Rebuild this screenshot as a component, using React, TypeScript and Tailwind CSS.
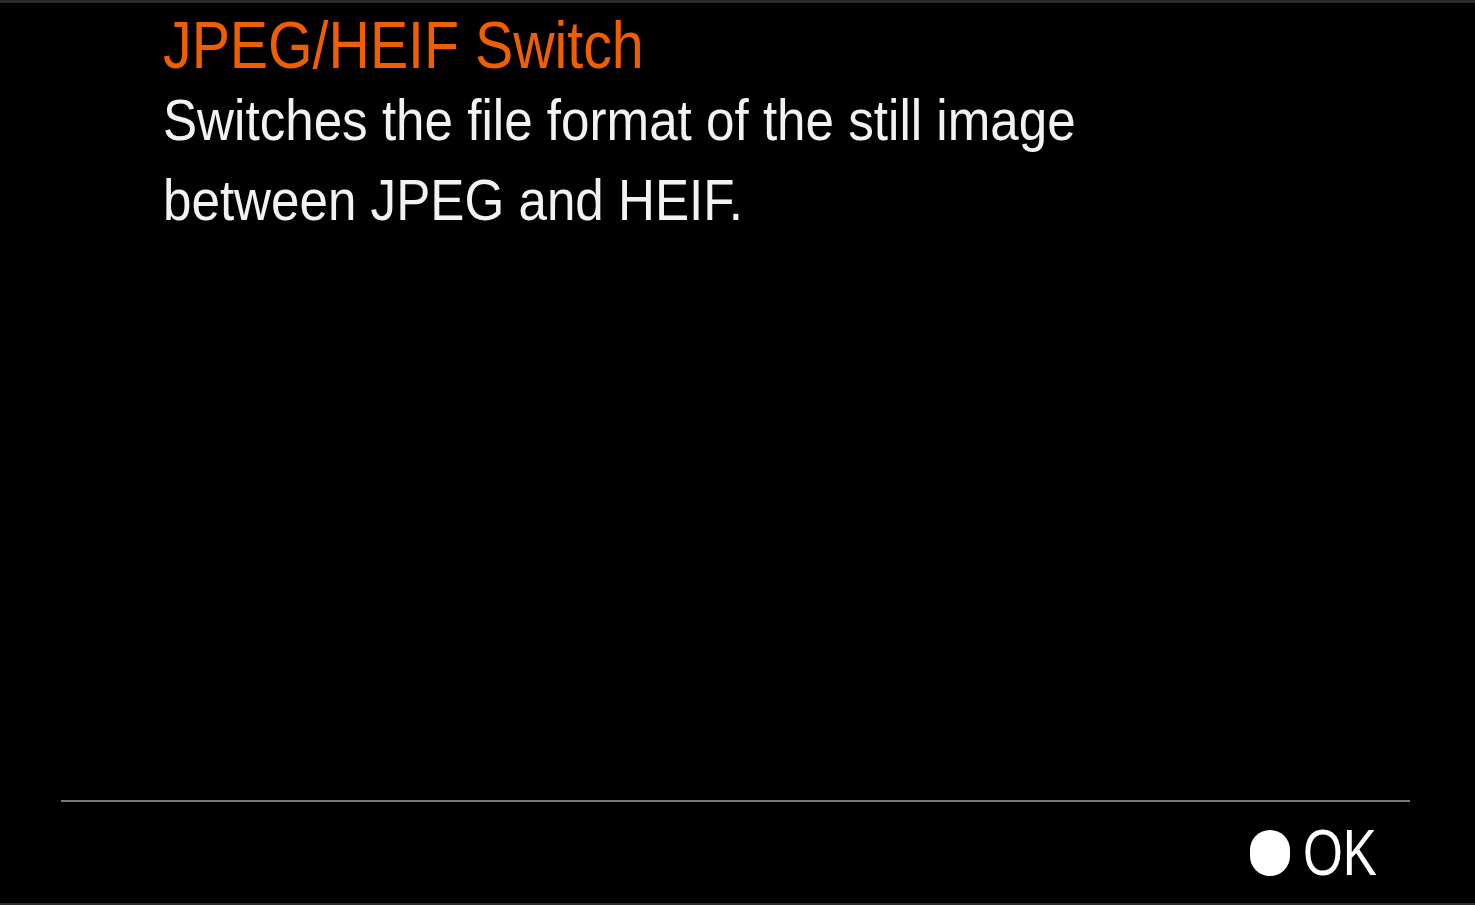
export default function App() {
  return (
    <div
      className="w-[1475px] h-[905px] bg-black border-t-[3px] border-b-[2px] border-[#2b2b2b] flex flex-col overflow-hidden"
      style={{ fontFamily: '"Liberation Sans", Arial, sans-serif' }}
    >
      {/* Help text */}
      <div className="pl-[163px] pt-[8px]">
        <h1 className="text-[67px] leading-[67px] text-[#ef5f00] origin-left scale-x-[0.855] whitespace-nowrap">
          JPEG/HEIF Switch
        </h1>
        <p className="mt-[2px] text-[58px] leading-[80px] text-[#f2f2f2] origin-left scale-x-[0.882] whitespace-nowrap">
          Switches the file format of the still image
          <br />
          between JPEG and HEIF.
        </p>
      </div>

      <div className="flex-1" />

      {/* Footer */}
      <div className="ml-[61px] mr-[65px] h-[2px] bg-[#7a7a7a]" />
      <div className="h-[101px] flex items-center justify-end pr-[80px] gap-[13px]">
        <div className="w-[40px] h-[46px] rounded-full bg-white" />
        <span className="text-[64px] leading-[64px] text-white origin-left scale-x-[0.8]">OK</span>
      </div>
    </div>
  );
}
